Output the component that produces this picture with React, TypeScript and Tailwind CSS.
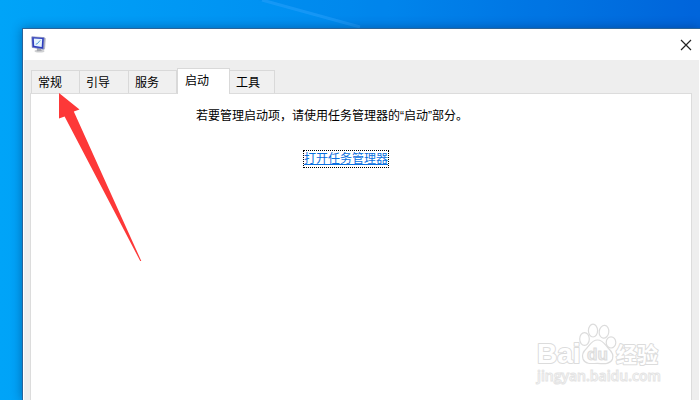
// App.tsx
import { useState } from "react";

const TABS = [
  { id: "general", label: "常规", width: "w-[49px]" },
  { id: "boot", label: "引导", width: "w-[49px]" },
  { id: "services", label: "服务", width: "w-12" },
  { id: "startup", label: "启动", width: "w-[53px]" },
  { id: "tools", label: "工具", width: "w-[45px]" },
];

function MonitorIcon() {
  return (
    <svg width="16" height="18" viewBox="0 0 16 18" aria-hidden="true">
      <ellipse cx="8.5" cy="15" rx="5" ry="1.6" fill="#cfd0d2" />
      <path d="M6 12l4 .8.8 2.2-5 .2z" fill="#a6a8ae" />
      <path d="M12.4 1.6l2.4.6-.8 11-2.4.6z" fill="#b8b9c4" />
      <path d="M.8.8L13.2 1.6 12.4 13.2 1.2 11.4z" fill="#2f3fc0" stroke="#8a90bb" strokeWidth=".7" />
      <path d="M2.8 2.4l8.4.6-.5 8-7.500-1.200z" fill="#e6f4fd" />
      <path d="M4.8 8.200l1.400-.4 3-3.400" fill="none" stroke="#4a98da" strokeWidth="1" />
    </svg>
  );
}

function Wallpaper() {
  return (
    <svg className="absolute inset-0 w-full h-7" viewBox="0 0 700 28" preserveAspectRatio="none" aria-hidden="true">
      <path d="M258 0L362 28H700V0z" fill="#0050d0" fillOpacity=".06" />
      <path d="M262 0L360 27" stroke="#35a8ff" strokeOpacity=".4" strokeWidth="3" />
    </svg>
  );
}

function Arrow() {
  return (
    <svg className="absolute left-[59px] top-[93px]" width="84" height="170" viewBox="0 0 84 170" aria-hidden="true">
      <path d="M0 0L20.5 16.5 14.8 18.6 82.3 168 81.2 168 5.6 23.4 0 25.6z" fill="#fd3838" />
    </svg>
  );
}

function Watermark() {
  return (
    <div className="absolute right-9 bottom-3 h-[66px] w-[132px] pointer-events-none">
      <svg
        width="132"
        height="66"
        viewBox="0 0 132 66"
        fill="#fff"
        stroke="#dcdcdc"
        strokeWidth="1.2"
        fontFamily="'Liberation Sans', 'Noto Sans CJK SC', sans-serif"
        fontWeight="700"
      >
        <ellipse cx="52.5" cy="17" rx="4.8" ry="6.4" />
        <ellipse cx="61" cy="8.6" rx="4.6" ry="6.4" />
        <ellipse cx="72" cy="9.8" rx="4.8" ry="6.4" transform="rotate(8 72 9.8)" />
        <ellipse cx="79" cy="20.4" rx="4.8" ry="5.6" />
        <path d="M65.5 18c-6 0-7.5 5-11 8.5-3.5 3.2-5 6.5-3.5 10.5 2 5 7 4.8 14.5 4.3 7.5.7 13 .8 15-4.3 1.3-4-.5-7.3-4-10.5C73 23 71.5 18 65.5 18z" />
        <g strokeWidth="2" paintOrder="stroke" strokeLinejoin="round">
          <text x="5" y="41" fontSize="28">Bai</text>
          <text x="84" y="40" fontSize="21">经验</text>
        </g>
        <text x="55" y="38" fontSize="17" fill="#f0f0f0" strokeWidth="1">du</text>
        <text x="5" y="59" fontSize="14" fontFamily="'Open Sans', sans-serif" fontWeight="600" strokeWidth="1" stroke="#e4e4e4">
          jingyan.baidu.com
        </text>
      </svg>
    </div>
  );
}

export default function App() {
  const [active, setActive] = useState("startup");

  return (
    <div className="relative flex min-h-screen overflow-hidden pt-7 pl-[22px] bg-linear-to-r from-[#00a4f8] via-[#008cf0] via-50% to-[#0066dc] font-['Liberation_Sans','Noto_Sans_CJK_SC',sans-serif] text-xs text-black">
      <Wallpaper />

      {/* Dialog window */}
      <div className="relative flex flex-1 flex-col border-t border-l border-[#2a6499] bg-white shadow-[0_0_10px_rgba(0,40,90,0.45)]">
        <header className="flex h-[31px] items-center justify-between pl-2 pr-2">
          <MonitorIcon />
          <button type="button" aria-label="关闭" className="flex size-3 items-center justify-center">
            <svg width="12" height="12" viewBox="0 0 12 12" aria-hidden="true">
              <path d="M1 1l10 10M11 1L1 11" stroke="#222" strokeWidth="1.2" />
            </svg>
          </button>
        </header>

        <main className="mx-px flex flex-1 flex-col bg-[#eee] pl-1.5 pr-[7px] pt-2">
          {/* Tabs */}
          <div role="tablist" className="flex items-end pl-px">
            {TABS.map((tab) => {
              const selected = tab.id === active;
              return (
                <button
                  key={tab.id}
                  type="button"
                  role="tab"
                  id={tab.id}
                  aria-selected={selected}
                  onClick={() => setActive(tab.id)}
                  className={`${tab.width} border-t border-[#d9d9d9] text-left leading-4 ${
                    selected
                      ? "relative -mb-px h-[26px] border-x bg-white pb-0.5 pl-[7px]"
                      : "h-[23px] border-r bg-[#f0f0f0] pt-px pl-1.5 first:border-l"
                  }`}
                >
                  {tab.label}
                </button>
              );
            })}
          </div>

          <section role="tabpanel" aria-labelledby={active} className="flex flex-1 flex-col border-x border-t border-[#dcdcdc] bg-white pt-3">
            {active === "startup" && (
              <div className="flex flex-col items-start gap-6 pl-[165px] leading-5">
                <p>若要管理启动项，请使用任务管理器的“启动”部分。</p>
                <a href="#taskmgr" className="ml-[107px] border border-dotted border-black leading-4 text-[#0a70e0] underline">
                  打开任务管理器
                </a>
              </div>
            )}
          </section>
        </main>
      </div>

      <Arrow />
      <Watermark />
    </div>
  );
}
